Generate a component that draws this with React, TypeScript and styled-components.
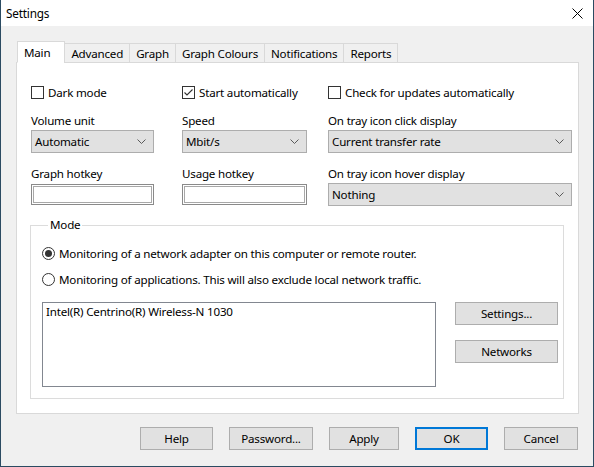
import React, { useState } from 'react';
import styled, { createGlobalStyle } from 'styled-components';

const GlobalStyle = createGlobalStyle`
  html, body {
    margin: 0;
    padding: 0;
    background: #f0f0f0;
  }
  * {
    box-sizing: border-box;
  }
`;

const font = `"Noto Sans", "Open Sans", sans-serif`;

const Window = styled.div`
  width: 594px;
  height: 467px;
  display: flex;
  flex-direction: column;
  background: #f0f0f0;
  border: 1px solid #2b4b62;
  border-top: none;
  font-family: ${font};
  font-size: 11.6px;
  letter-spacing: -0.2px;
  color: #000;
`;

const TitleBar = styled.div`
  height: 26px;
  display: flex;
  align-items: center;
  justify-content: space-between;
  background: #fff;
  padding: 0 10px 0 5px;
`;

const TitleText = styled.span`
  font-size: 11.8px;
`;

const Body = styled.div`
  flex: 1;
  display: flex;
  flex-direction: column;
  padding: 15px 14px 0 15px;
`;

const TabStrip = styled.div`
  display: flex;
  align-items: flex-end;
  height: 22px;
  padding-left: 1px;
  margin-bottom: -1px;
  position: relative;
  z-index: 1;
`;

const Tab = styled.div<{ $active?: boolean }>`
  height: ${p => (p.$active ? '22px' : '20px')};
  padding: ${p => (p.$active ? '0 14px 0 6px' : '0 6px 0 6px')};
  margin-left: -1px;
  display: flex;
  align-items: center;
  background: ${p => (p.$active ? '#fff' : '#f0f0f0')};
  border: 1px solid #d9d9d9;
  border-bottom-color: ${p => (p.$active ? '#fff' : '#d9d9d9')};
  white-space: nowrap;
  &:first-child {
    margin-left: 0;
  }
`;

const Panel = styled.div`
  height: 352px;
  background: #fff;
  border: 1px solid #d9d9d9;
  padding: 21px 5px 0 14px;
  display: flex;
  flex-direction: column;
`;

const OptionsGrid = styled.div`
  display: grid;
  grid-template-columns: 151px 146px 244px;
  grid-template-rows: 16px auto auto;
  row-gap: 12px;
`;

const Field = styled.div`
  display: flex;
  flex-direction: column;
`;

const FieldLabel = styled.div`
  height: 16px;
  line-height: 16px;
  margin-top: 1px;
  margin-bottom: 1px;
`;

const CheckRow = styled.label`
  display: flex;
  align-items: center;
  gap: 4px;
  height: 16px;
`;

const CheckBox = styled.span`
  width: 13px;
  height: 13px;
  border: 1px solid #333;
  background: #fff;
  display: inline-flex;
  align-items: center;
  justify-content: center;
`;

const Combo = styled.div<{ $width: number }>`
  width: ${p => p.$width}px;
  height: 23px;
  background: #e1e1e1;
  border: 1px solid #adadad;
  display: flex;
  align-items: center;
  justify-content: space-between;
  padding: 0 7px 0 3px;
`;

const HotkeyBox = styled.div<{ $width: number }>`
  width: ${p => p.$width}px;
  height: 21px;
  margin-top: 1px;
  background: #fff;
  border: 1px solid #8a8a8a;
  box-shadow: inset 0 0 0 1px #fff, inset 0 0 0 2px #a8a8a8;
`;

const GroupBox = styled.fieldset`
  width: 534px;
  height: 182px;
  margin: 11px 0 0 -1px;
  padding: 12px 5px 0 11px;
  border: 1px solid #dcdcdc;
  display: flex;
  flex-direction: column;
`;

const Legend = styled.legend`
  padding: 0 2px;
  margin-left: 6px;
  line-height: 16px;
`;

const RadioRow = styled.label`
  display: flex;
  align-items: center;
  gap: 4px;
  height: 16px;
  margin-bottom: 10px;
`;

const Radio = styled.span<{ $checked?: boolean }>`
  width: 13px;
  height: 13px;
  border-radius: 50%;
  border: 1px solid #333;
  background: #fff;
  display: inline-flex;
  align-items: center;
  justify-content: center;
  &::after {
    content: '';
    width: 7px;
    height: 7px;
    border-radius: 50%;
    background: ${p => (p.$checked ? '#333' : 'transparent')};
  }
`;

const AdapterRow = styled.div`
  display: flex;
  gap: 19px;
  margin-top: 5px;
`;

const ListBox = styled.div`
  width: 394px;
  height: 85px;
  border: 1px solid #828790;
  background: #fff;
  padding: 1px 3px;
  line-height: 15px;
`;

const SideButtons = styled.div`
  display: flex;
  flex-direction: column;
  gap: 15px;
`;

const Button = styled.button<{ $width: number; $default?: boolean }>`
  width: ${p => p.$width}px;
  height: 23px;
  background: #e1e1e1;
  border: 1px solid ${p => (p.$default ? '#0078d7' : '#adadad')};
  box-shadow: ${p => (p.$default ? 'inset 0 0 0 1px #0078d7' : 'none')};
  font-family: ${font};
  font-size: 11.6px;
  letter-spacing: -0.2px;
  color: #000;
  padding: 0;
`;

const Footer = styled.div`
  display: flex;
  justify-content: flex-end;
  gap: 16px;
  padding: 13px 1px 0 0;
`;

const Chevron = () => (
  <svg width="9" height="5" viewBox="0 0 9 5">
    <path d="M0.5 0.5 L4.5 4.5 L8.5 0.5" fill="none" stroke="#5a5a5a" strokeWidth="1" />
  </svg>
);

const CloseIcon = () => (
  <svg width="11" height="11" viewBox="0 0 11 11">
    <path d="M0.5 0.5 L10.5 10.5 M10.5 0.5 L0.5 10.5" stroke="#000" strokeWidth="1" />
  </svg>
);

const Check = ({ checked }: { checked?: boolean }) => (
  <CheckBox>
    {checked && (
      <svg width="11" height="11" viewBox="0 0 11 11">
        <path d="M1.5 5.5 L4 8 L9.5 2.5" fill="none" stroke="#333" strokeWidth="1.1" />
      </svg>
    )}
  </CheckBox>
);

const tabs = ['Main', 'Advanced', 'Graph', 'Graph Colours', 'Notifications', 'Reports'];

const App: React.FC = () => {
  const [activeTab] = useState(0);

  return (
    <Window>
      <GlobalStyle />
      <TitleBar>
        <TitleText>Settings</TitleText>
        <CloseIcon />
      </TitleBar>
      <Body>
        <TabStrip>
          {tabs.map((t, i) => (
            <Tab key={t} $active={i === activeTab}>
              {t}
            </Tab>
          ))}
        </TabStrip>
        <Panel>
          <OptionsGrid>
            <CheckRow>
              <Check />
              Dark mode
            </CheckRow>
            <CheckRow>
              <Check checked />
              Start automatically
            </CheckRow>
            <CheckRow>
              <Check />
              Check for updates automatically
            </CheckRow>

            <Field>
              <FieldLabel>Volume unit</FieldLabel>
              <Combo $width={123}>
                Automatic
                <Chevron />
              </Combo>
            </Field>
            <Field>
              <FieldLabel>Speed</FieldLabel>
              <Combo $width={125}>
                Mbit/s
                <Chevron />
              </Combo>
            </Field>
            <Field>
              <FieldLabel>On tray icon click display</FieldLabel>
              <Combo $width={244}>
                Current transfer rate
                <Chevron />
              </Combo>
            </Field>

            <Field>
              <FieldLabel>Graph hotkey</FieldLabel>
              <HotkeyBox $width={123} />
            </Field>
            <Field>
              <FieldLabel>Usage hotkey</FieldLabel>
              <HotkeyBox $width={125} />
            </Field>
            <Field>
              <FieldLabel>On tray icon hover display</FieldLabel>
              <Combo $width={244}>
                Nothing
                <Chevron />
              </Combo>
            </Field>
          </OptionsGrid>

          <GroupBox>
            <Legend>Mode</Legend>
            <RadioRow>
              <Radio $checked />
              Monitoring of a network adapter on this computer or remote router.
            </RadioRow>
            <RadioRow>
              <Radio />
              Monitoring of applications. This will also exclude local network traffic.
            </RadioRow>
            <AdapterRow>
              <ListBox>Intel(R) Centrino(R) Wireless-N 1030</ListBox>
              <SideButtons>
                <Button $width={103}>Settings...</Button>
                <Button $width={103}>Networks</Button>
              </SideButtons>
            </AdapterRow>
          </GroupBox>
        </Panel>
        <Footer>
          <Button $width={73}>Help</Button>
          <Button $width={84}>Password...</Button>
          <Button $width={70}>Apply</Button>
          <Button $width={73} $default>
            OK
          </Button>
          <Button $width={74}>Cancel</Button>
        </Footer>
      </Body>
    </Window>
  );
};

export default App;
